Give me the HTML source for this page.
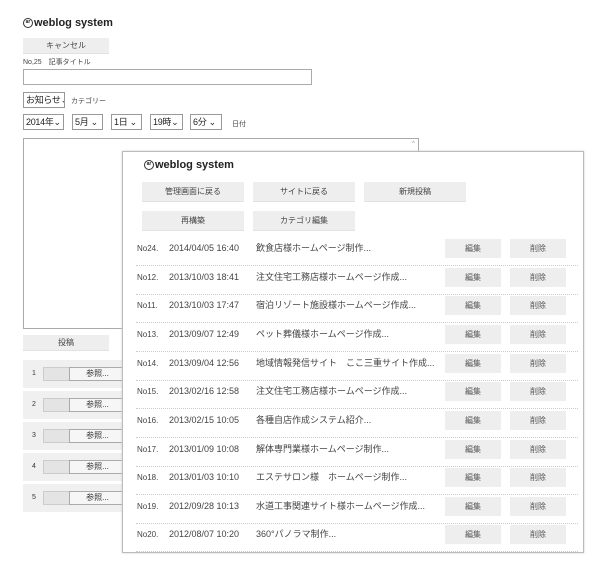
<!DOCTYPE html>
<html><head><meta charset="utf-8"><style>
*{margin:0;padding:0;box-sizing:border-box}
body{width:600px;height:562px;background:#fff;position:relative;overflow:hidden;font-family:"Liberation Sans","Noto Sans CJK JP",sans-serif;color:#333}
.a{position:absolute;white-space:nowrap}
.logo{font-weight:bold;font-size:11px;color:#222;display:flex;align-items:center;gap:1px}
.logo i{display:inline-block;width:10px;height:10px;border:1.5px solid #333;border-radius:50%;font-style:normal;font-size:5px;line-height:7px;text-align:center}
.btn{position:absolute;background:#eee;font-size:8px;color:#444;text-align:center;border-bottom:1px solid #e2e2e2;white-space:nowrap}
.sel{position:absolute;border:1px solid #999;height:16px;font-size:9px;line-height:14px;padding-left:2px;color:#222;background:#fff;white-space:nowrap;overflow:hidden;letter-spacing:-0.3px}
.sm{font-size:7px;color:#444}
.fr{position:absolute;left:23px;width:110px;height:28px;background:#f0f0f0}
.fr span{position:absolute;left:9px;top:10px;font-size:7px}
.fr b{position:absolute;left:20px;top:7px;width:82px;height:14px;background:#e4e4e4;border:1px solid #ccc;font-weight:normal}
.fr b em{position:absolute;left:25px;top:-1px;width:57px;height:14px;border:1px solid #aaa;background:#f6f6f6;font-style:normal;font-size:8px;text-align:center;line-height:12px}
#p{position:absolute;left:122px;top:151px;width:462px;height:402px;background:#fff;border:1px solid #bbb;box-shadow:0 0 2px #ccc}
.row{position:absolute;left:13px;width:442px;height:29px;border-bottom:1px dotted #ccc;font-size:9px;color:#444}
.row span{position:absolute;top:2px;line-height:19px;white-space:nowrap}
.row .n{left:1px;font-size:8px}
.row .d{left:33px}
.row .t{left:120px}
.row .e,.row .x{width:56px;height:19px;background:#eee;font-size:8px;text-align:center;color:#555}
.row .e{left:309px}.row .x{left:374px}
</style></head><body>
<div class="a logo" style="left:23px;top:17px"><i>ar</i>weblog system</div>
<div class="btn" style="left:23px;top:38px;width:86px;height:16px;line-height:16px">キャンセル</div>
<div class="a sm" style="left:23px;top:57px">No,25　記事タイトル</div>
<div class="a" style="left:23px;top:69px;width:289px;height:16px;border:1px solid #aaa"></div>
<div class="sel" style="left:23px;top:92px;width:42px">お知らせ⌄</div>
<div class="a sm" style="left:71px;top:96px">カテゴリー</div>
<div class="sel" style="left:23px;top:114px;width:41px">2014年⌄</div>
<div class="sel" style="left:72px;top:114px;width:31px">5月 ⌄</div>
<div class="sel" style="left:111px;top:114px;width:31px">1日 ⌄</div>
<div class="sel" style="left:150px;top:114px;width:33px">19時⌄</div>
<div class="sel" style="left:190px;top:114px;width:32px">6分 ⌄</div>
<div class="a sm" style="left:232px;top:119px">日付</div>
<div class="a" style="left:23px;top:138px;width:396px;height:191px;border:1px solid #aaa"></div>
<div class="a" style="left:412px;top:141px;font-size:6px;color:#999">^</div>
<div class="btn" style="left:23px;top:335px;width:86px;height:16px;line-height:16px">投稿</div>
<div class="fr" style="top:360px"><span>1</span><b><em>参照...</em></b></div>
<div class="fr" style="top:391px"><span>2</span><b><em>参照...</em></b></div>
<div class="fr" style="top:422px"><span>3</span><b><em>参照...</em></b></div>
<div class="fr" style="top:453px"><span>4</span><b><em>参照...</em></b></div>
<div class="fr" style="top:484px"><span>5</span><b><em>参照...</em></b></div>
<div id="p">
<div class="a logo" style="left:21px;top:7px"><i>ar</i>weblog system</div>
<div class="btn" style="left:19px;top:30px;width:102px;height:20px;line-height:20px">管理画面に戻る</div>
<div class="btn" style="left:130px;top:30px;width:102px;height:20px;line-height:20px">サイトに戻る</div>
<div class="btn" style="left:241px;top:30px;width:102px;height:20px;line-height:20px">新規投稿</div>
<div class="btn" style="left:19px;top:59px;width:102px;height:20px;line-height:20px">再構築</div>
<div class="btn" style="left:130px;top:59px;width:102px;height:20px;line-height:20px">カテゴリ編集</div>
<div class="row" style="top:85px"><span class="n">No24.</span><span class="d">2014/04/05 16:40</span><span class="t">飲食店様ホームページ制作...</span><span class="e">編集</span><span class="x">削除</span></div>
<div class="row" style="top:114px"><span class="n">No12.</span><span class="d">2013/10/03 18:41</span><span class="t">注文住宅工務店様ホームページ作成...</span><span class="e">編集</span><span class="x">削除</span></div>
<div class="row" style="top:142px"><span class="n">No11.</span><span class="d">2013/10/03 17:47</span><span class="t">宿泊リゾート施設様ホームページ作成...</span><span class="e">編集</span><span class="x">削除</span></div>
<div class="row" style="top:171px"><span class="n">No13.</span><span class="d">2013/09/07 12:49</span><span class="t">ペット葬儀様ホームページ作成...</span><span class="e">編集</span><span class="x">削除</span></div>
<div class="row" style="top:200px"><span class="n">No14.</span><span class="d">2013/09/04 12:56</span><span class="t">地域情報発信サイト　ここ三重サイト作成...</span><span class="e">編集</span><span class="x">削除</span></div>
<div class="row" style="top:228px"><span class="n">No15.</span><span class="d">2013/02/16 12:58</span><span class="t">注文住宅工務店様ホームページ作成...</span><span class="e">編集</span><span class="x">削除</span></div>
<div class="row" style="top:257px"><span class="n">No16.</span><span class="d">2013/02/15 10:05</span><span class="t">各種自店作成システム紹介...</span><span class="e">編集</span><span class="x">削除</span></div>
<div class="row" style="top:286px"><span class="n">No17.</span><span class="d">2013/01/09 10:08</span><span class="t">解体専門業様ホームページ制作...</span><span class="e">編集</span><span class="x">削除</span></div>
<div class="row" style="top:314px"><span class="n">No18.</span><span class="d">2013/01/03 10:10</span><span class="t">エステサロン様　ホームページ制作...</span><span class="e">編集</span><span class="x">削除</span></div>
<div class="row" style="top:343px"><span class="n">No19.</span><span class="d">2012/09/28 10:13</span><span class="t">水道工事関連サイト様ホームページ作成...</span><span class="e">編集</span><span class="x">削除</span></div>
<div class="row" style="top:371px"><span class="n">No20.</span><span class="d">2012/08/07 10:20</span><span class="t">360°パノラマ制作...</span><span class="e">編集</span><span class="x">削除</span></div>
</div>
</body></html>
